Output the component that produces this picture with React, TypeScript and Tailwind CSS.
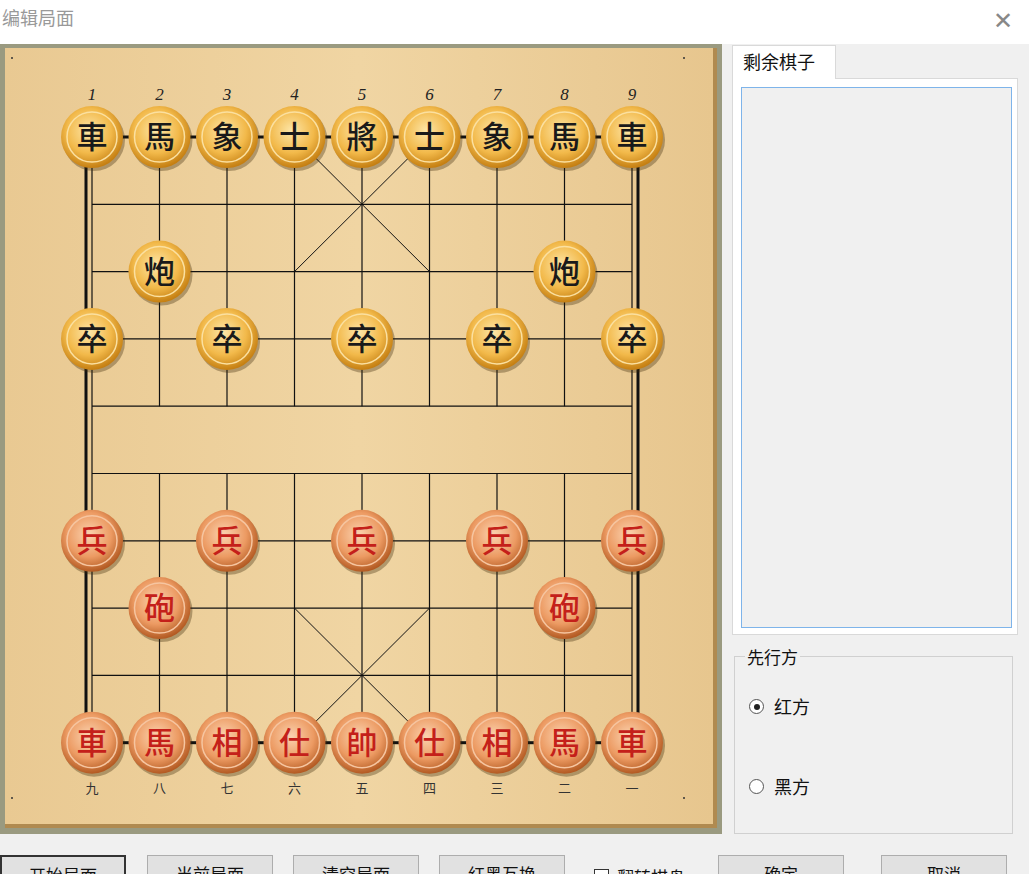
import React from "react";

const X0 = 92, DX = 67.5, Y0 = 137, DY = 67.3;
const cx = (i: number) => X0 + DX * i;
const cy = (j: number) => Y0 + DY * j;

const black = ["車","馬","象","士","將","士","象","馬","車"];
const red = ["車","馬","相","仕","帥","仕","相","馬","車"];
const pieces: { c: number; r: number; t: string; red: boolean }[] = [];
black.forEach((t, i) => pieces.push({ c: i, r: 0, t, red: false }));
pieces.push({ c: 1, r: 2, t: "炮", red: false }, { c: 7, r: 2, t: "炮", red: false });
[0, 2, 4, 6, 8].forEach((c) => pieces.push({ c, r: 3, t: "卒", red: false }));
[0, 2, 4, 6, 8].forEach((c) => pieces.push({ c, r: 6, t: "兵", red: true }));
pieces.push({ c: 1, r: 7, t: "砲", red: true }, { c: 7, r: 7, t: "砲", red: true });
red.forEach((t, i) => pieces.push({ c: i, r: 9, t, red: true }));

function Board() {
  const lines: React.ReactNode[] = [];
  for (let j = 0; j < 10; j++) lines.push(<line key={"h" + j} x1={cx(0)} y1={cy(j)} x2={cx(8)} y2={cy(j)} stroke="#111" strokeWidth={1.2} />);
  for (let i = 0; i < 9; i++) {
    if (i === 0 || i === 8) lines.push(<line key={"v" + i} x1={cx(i)} y1={cy(0)} x2={cx(i)} y2={cy(9)} stroke="#111" strokeWidth={1.2} />);
    else {
      lines.push(<line key={"va" + i} x1={cx(i)} y1={cy(0)} x2={cx(i)} y2={cy(4)} stroke="#111" strokeWidth={1.2} />);
      lines.push(<line key={"vb" + i} x1={cx(i)} y1={cy(5)} x2={cx(i)} y2={cy(9)} stroke="#111" strokeWidth={1.2} />);
    }
  }
  const diag = (a: number, b: number) => [
    <line key={"d1" + a} x1={cx(3)} y1={cy(a)} x2={cx(5)} y2={cy(b)} stroke="#111" strokeWidth={1} />,
    <line key={"d2" + a} x1={cx(5)} y1={cy(a)} x2={cx(3)} y2={cy(b)} stroke="#111" strokeWidth={1} />,
  ];
  const cn = ["九","八","七","六","五","四","三","二","一"];
  return (
    <svg width={722} height={790} viewBox="0 44 722 790" className="block shrink-0">
      <defs>
        <linearGradient id="wood" x1="0" y1="0" x2="1" y2="0">
          <stop offset="0" stopColor="#e9c992" />
          <stop offset="0.5" stopColor="#f0d5a3" />
          <stop offset="1" stopColor="#e7c68e" />
        </linearGradient>
        <radialGradient id="pb" cx="0.45" cy="0.4" r="0.6">
          <stop offset="0" stopColor="#fde6a8" />
          <stop offset="0.6" stopColor="#f2b94a" />
          <stop offset="1" stopColor="#c57f12" />
        </radialGradient>
        <radialGradient id="pr" cx="0.45" cy="0.4" r="0.6">
          <stop offset="0" stopColor="#fbd3b0" />
          <stop offset="0.6" stopColor="#ec9a62" />
          <stop offset="1" stopColor="#b35a22" />
        </radialGradient>
      </defs>
      <rect x={0} y={44} width={722} height={790} fill="#9a9a80" />
      <rect x={5} y={48} width={712} height={780} fill="#b08a50" />
      <rect x={5} y={48} width={708} height={776} fill="url(#wood)" />
      <rect x={86} y={cy(0)} width={552} height={cy(9) - cy(0)} fill="none" stroke="#111" strokeWidth={3} />
      {lines}
      {diag(0, 2)}
      {diag(7, 9)}
      {[12, 684].map((x) => [58, 798].map((y) => <circle key={x + "-" + y} cx={x} cy={y} r={1} fill="#333" />))}
      {Array.from({ length: 9 }, (_, i) => (
        <text key={"n" + i} x={cx(i)} y={100} textAnchor="middle" fontSize={17} fontStyle="italic" fontFamily="'Liberation Serif', serif" fill="#222">{i + 1}</text>
      ))}
      {cn.map((t, i) => (
        <text key={"c" + i} x={cx(i)} y={793} textAnchor="middle" fontSize={13} fontFamily="'Noto Sans CJK SC', sans-serif" fill="#333">{t}</text>
      ))}
      {pieces.map((p, k) => (
        <g key={k}>
          <circle cx={cx(p.c) + 2} cy={cy(p.r) + 3} r={31} fill="rgba(60,40,10,0.35)" />
          <circle cx={cx(p.c)} cy={cy(p.r)} r={31} fill={p.red ? "url(#pr)" : "url(#pb)"} />
          <circle cx={cx(p.c)} cy={cy(p.r)} r={25} fill="none" stroke={p.red ? "#f6c5a0" : "#fbe0a0"} strokeWidth={1.5} />
          <text x={cx(p.c)} y={cy(p.r) + 11} textAnchor="middle" fontSize={31} fontWeight={500} fontFamily="'Noto Sans CJK TC', 'Noto Sans CJK SC', sans-serif" fill={p.red ? "#c4201a" : "#1a1a1a"}>{p.t}</text>
        </g>
      ))}
    </svg>
  );
}

function Btn({ t, def }: { t: string; def?: boolean }) {
  return (
    <div className={`shrink-0 w-[126px] h-[32px] bg-[#e1e1e1] flex items-start justify-center pt-[5px] text-[17px] ${def ? "border-2 border-[#333]" : "border border-[#adadad]"}`}>{t}</div>
  );
}

export default function App() {
  return (
    <div className="w-[1029px] h-[874px] overflow-hidden bg-[#f0f0f0] text-[#111]" style={{ fontFamily: "'Noto Sans CJK SC', 'Noto Sans', sans-serif" }}>
      <div className="h-[44px] bg-white flex items-start justify-between pl-[2px] pr-[16px]">
        <div className="text-[18px] text-[#999] mt-[4px]">编辑局面</div>
        <div className="text-[24px] text-[#888] leading-none mt-[7px] font-light">✕</div>
      </div>
      <div className="flex">
        <Board />
        <div className="ml-[10px] w-[288px]">
          <div className="mt-[1px] w-[104px] h-[34px] bg-white border border-b-0 border-[#d9d9d9] text-[18px] pl-[10px] pt-[2px] relative z-10">剩余棋子</div>
          <div className="w-[286px] h-[557px] bg-white border border-[#d9d9d9] -mt-px p-[8px] pr-[5px] pb-[6px]">
            <div className="w-full h-full bg-[#f0f0f0] border border-[#7eb4ea]"></div>
          </div>
          <div className="relative mt-[21px] ml-[2px] w-[279px] h-[178px] border border-[#d0d0d0]">
            <div className="absolute -top-[13px] left-[10px] bg-[#f0f0f0] px-[2px] text-[17px]">先行方</div>
            <div className="absolute top-[36px] left-[14px] flex items-center gap-[10px] text-[18px]">
              <span className="w-[15px] h-[15px] rounded-full border border-[#555] bg-white flex items-center justify-center"><span className="w-[6px] h-[6px] rounded-full bg-[#222]" /></span>红方
            </div>
            <div className="absolute top-[116px] left-[14px] flex items-center gap-[10px] text-[18px]">
              <span className="w-[15px] h-[15px] rounded-full border border-[#555] bg-white" />黑方
            </div>
          </div>
        </div>
      </div>
      <div className="flex items-start mt-[21px]">
        <Btn t="开始局面" def />
        <div className="ml-[21px] shrink-0"><Btn t="当前局面" /></div>
        <div className="ml-[20px] shrink-0"><Btn t="清空局面" /></div>
        <div className="ml-[20px] shrink-0"><Btn t="红黑互换" /></div>
        <div className="ml-[29px] mt-[9px] shrink-0 flex items-center gap-[8px] text-[17px] whitespace-nowrap">
          <span className="w-[15px] h-[15px] border border-[#333] bg-white" />翻转棋盘
        </div>
        <div className="ml-[33px] shrink-0"><Btn t="确定" /></div>
        <div className="ml-[37px] shrink-0"><Btn t="取消" /></div>
      </div>
    </div>
  );
}
